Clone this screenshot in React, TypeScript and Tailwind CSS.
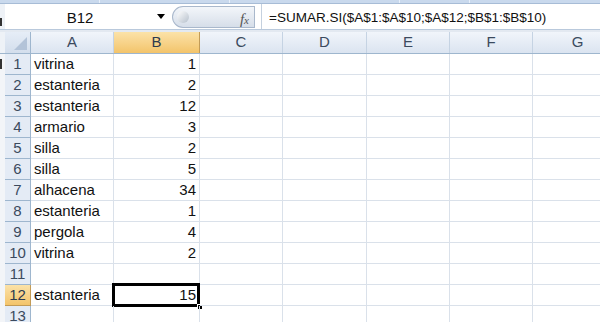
import React from "react";

const cols = [
  { k: "A", w: 83 },
  { k: "B", w: 86 },
  { k: "C", w: 83 },
  { k: "D", w: 84 },
  { k: "E", w: 83 },
  { k: "F", w: 83 },
  { k: "G", w: 90 },
];

const data: [string, string][] = [
  ["vitrina", "1"],
  ["estanteria", "2"],
  ["estanteria", "12"],
  ["armario", "3"],
  ["silla", "2"],
  ["silla", "5"],
  ["alhacena", "34"],
  ["estanteria", "1"],
  ["pergola", "4"],
  ["vitrina", "2"],
  ["", ""],
  ["estanteria", "15"],
  ["", ""],
];

export default function App() {
  return (
    <div
      className="w-[600px] h-[322px] overflow-hidden bg-white relative"
      style={{ fontFamily: '"Liberation Sans", Arial, sans-serif' }}
    >
      {/* ribbon bottom strip */}
      <div className="h-[4px] flex bg-[#c9d9ed] border-b border-[#a7bcd6]">
        <div className="w-[100px] shrink-0 border-r border-[#e8f0fa]" />
        <div className="w-[130px] shrink-0 border-r border-[#e8f0fa]" />
        <div className="w-[170px] shrink-0 border-r border-[#e8f0fa]" />
        <div className="w-[70px] shrink-0 border-r border-[#e8f0fa]" />
      </div>
      {/* formula bar */}
      <div className="h-[26px] flex items-center bg-white border-b border-[#b9c9dc] relative">
        <div className="w-[5px] shrink-0 h-full bg-[#eef2f7] relative">
          <div className="absolute left-0 top-[14px] w-[2px] h-[8px] bg-[#333]" />
        </div>
        <div className="w-[150px] shrink-0 text-center text-[15px] text-[#111] leading-none pt-[2px]">B12</div>
        <div className="w-[12px] shrink-0 flex justify-center">
          <div className="w-0 h-0 border-l-[4px] border-r-[4px] border-t-[5px] border-l-transparent border-r-transparent border-t-black" />
        </div>
        <div className="ml-[5px] shrink-0 w-[83px] h-[22px] rounded-l-full rounded-r-[3px] bg-gradient-to-b from-[#f3f6fa] to-[#d6dee9] border border-[#a9b8cc] flex items-center relative">
          <div className="ml-[4px] w-[12px] h-[12px] rounded-full bg-gradient-to-br from-[#ffffff] to-[#b6c0cc]" />
          <span
            className="absolute right-[5px] top-[1px] text-[15px] italic text-[#555]"
            style={{ fontFamily: '"Liberation Serif", serif' }}
          >
            f<span className="text-[11px]">x</span>
          </span>
        </div>
        <div className="w-[1px] shrink-0 h-full bg-[#c5d1df] ml-[6px]" />
        <div className="ml-[7px] text-[13.5px] text-[#111] leading-none pt-[2px] whitespace-nowrap">
          =SUMAR.SI($A$1:$A$10;$A$12;$B$1:$B$10)
        </div>
      </div>
      <div className="h-[2px] bg-[#e3e9f1]" />
      {/* column header row */}
      <div className="h-[22px] flex border-b border-[#9eb6ce]">
        <div className="w-[5px] shrink-0 bg-[#eef2f7]" />
        <div className="w-[26px] shrink-0 bg-gradient-to-b from-[#e6edf7] to-[#d3deec] border-r border-[#9eb6ce] relative">
          <svg className="absolute right-[3px] bottom-[3px]" width="13" height="13" viewBox="0 0 13 13">
            <polygon points="13,0 13,13 0,13" fill="#b3c3d8" />
          </svg>
        </div>
        {cols.map((c) => (
          <div
            key={c.k}
            style={{ width: c.w }}
            className={
              "shrink-0 flex items-center justify-center text-[15px] border-r " +
              (c.k === "B"
                ? "bg-gradient-to-b from-[#fbe2a8] to-[#f3c46a] border-[#c29b57] text-[#2e3b4e]"
                : "bg-gradient-to-b from-[#f1f5fb] to-[#dbe4f0] border-[#c5d3e3] text-[#3b4a5e]")
            }
          >
            {c.k}
          </div>
        ))}
      </div>
      {/* rows */}
      {data.map((r, i) => {
        const sel = i === 11;
        return (
          <div key={i} className="h-[21px] flex">
            <div className="w-[5px] shrink-0 bg-[#f3f5f8] relative">
              {i === 0 && <div className="absolute left-0 top-[5px] w-[2px] h-[10px] bg-[#333]" />}
            </div>
            <div
              className={
                "w-[26px] shrink-0 flex items-center justify-center text-[15px] border-r border-b " +
                (sel
                  ? "bg-gradient-to-b from-[#fbe2a8] to-[#f3c46a] border-[#c29b57] text-[#2e3b4e]"
                  : "bg-[#e4ebf5] border-[#9eb6ce] text-[#3b4a5e]")
              }
            >
              {i + 1}
            </div>
            {cols.map((c, j) => (
              <div
                key={c.k}
                style={{ width: c.w }}
                className={
                  "shrink-0 border-r border-b border-[#dae1ea] flex items-center text-[15px] text-[#111] px-[3px] relative " +
                  (j === 1 ? "justify-end" : "justify-start")
                }
              >
                {j === 0 ? r[0] : j === 1 ? r[1] : ""}
                {sel && j === 1 && (
                  <>
                    <div className="absolute left-[-2px] top-[-2px] right-[-1px] bottom-[-2px] border-[3px] border-black pointer-events-none" />
                    <div className="absolute right-[-4px] bottom-[-5px] w-[6px] h-[6px] bg-black border border-white" />
                  </>
                )}
              </div>
            ))}
          </div>
        );
      })}
    </div>
  );
}
